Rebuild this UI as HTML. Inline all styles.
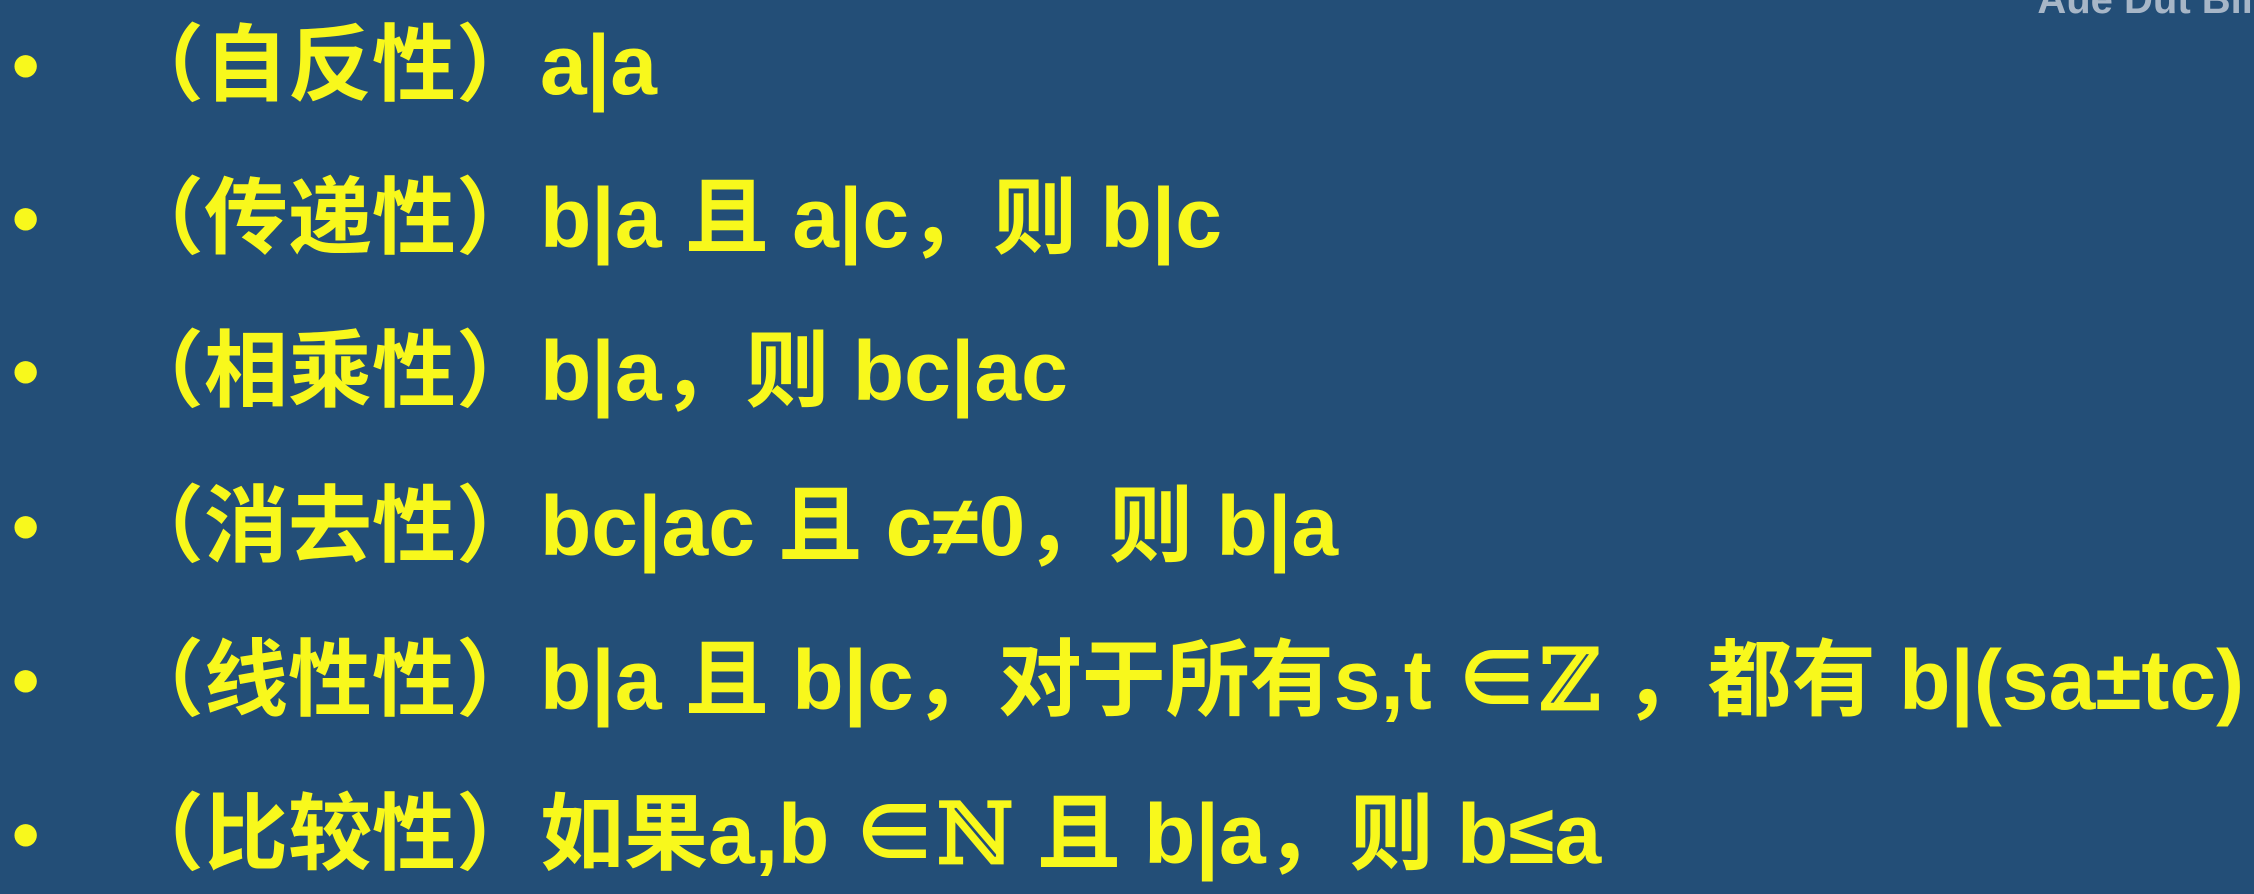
<!DOCTYPE html>
<html><head><meta charset="utf-8"><style>
html,body{margin:0;padding:0}
body{width:2254px;height:891px;background:#234e77;overflow:hidden;position:relative;
font-family:"Liberation Sans","Noto Sans CJK SC",sans-serif;font-weight:bold;color:#f8f81c}
.r{position:absolute;left:0;height:120px;line-height:120px;font-size:84px;white-space:nowrap}
.b{position:absolute;left:12px;font-size:78px}
.t{position:absolute;left:120px}
.m{font-family:"DejaVu Serif",serif;}
.wm{position:absolute;top:-22px;right:-10px;font-size:40px;color:#c9d1dc;opacity:.8;font-family:"Liberation Sans",sans-serif}
</style></head><body>
<div class="wm">Aue Dut Bili</div>
<div class="r" style="top:5px"><span class="b">•</span><span class="t">（自反性）a|a</span></div>
<div class="r" style="top:158px"><span class="b">•</span><span class="t">（传递性）b|a 且 a|c，则 b|c</span></div>
<div class="r" style="top:311px"><span class="b">•</span><span class="t">（相乘性）b|a，则 bc|ac</span></div>
<div class="r" style="top:466px"><span class="b">•</span><span class="t">（消去性）bc|ac 且 c≠0，则 b|a</span></div>
<div class="r" style="top:620px"><span class="b">•</span><span class="t">（线性性）b|a 且 b|c，对于所有s,t ∈<span class="m">ℤ</span> ，都有 b|(sa±tc)</span></div>
<div class="r" style="top:774px"><span class="b">•</span><span class="t">（比较性）如果a,b ∈<span class="m">ℕ</span> 且 b|a，则 b≤a</span></div>
</body></html>
